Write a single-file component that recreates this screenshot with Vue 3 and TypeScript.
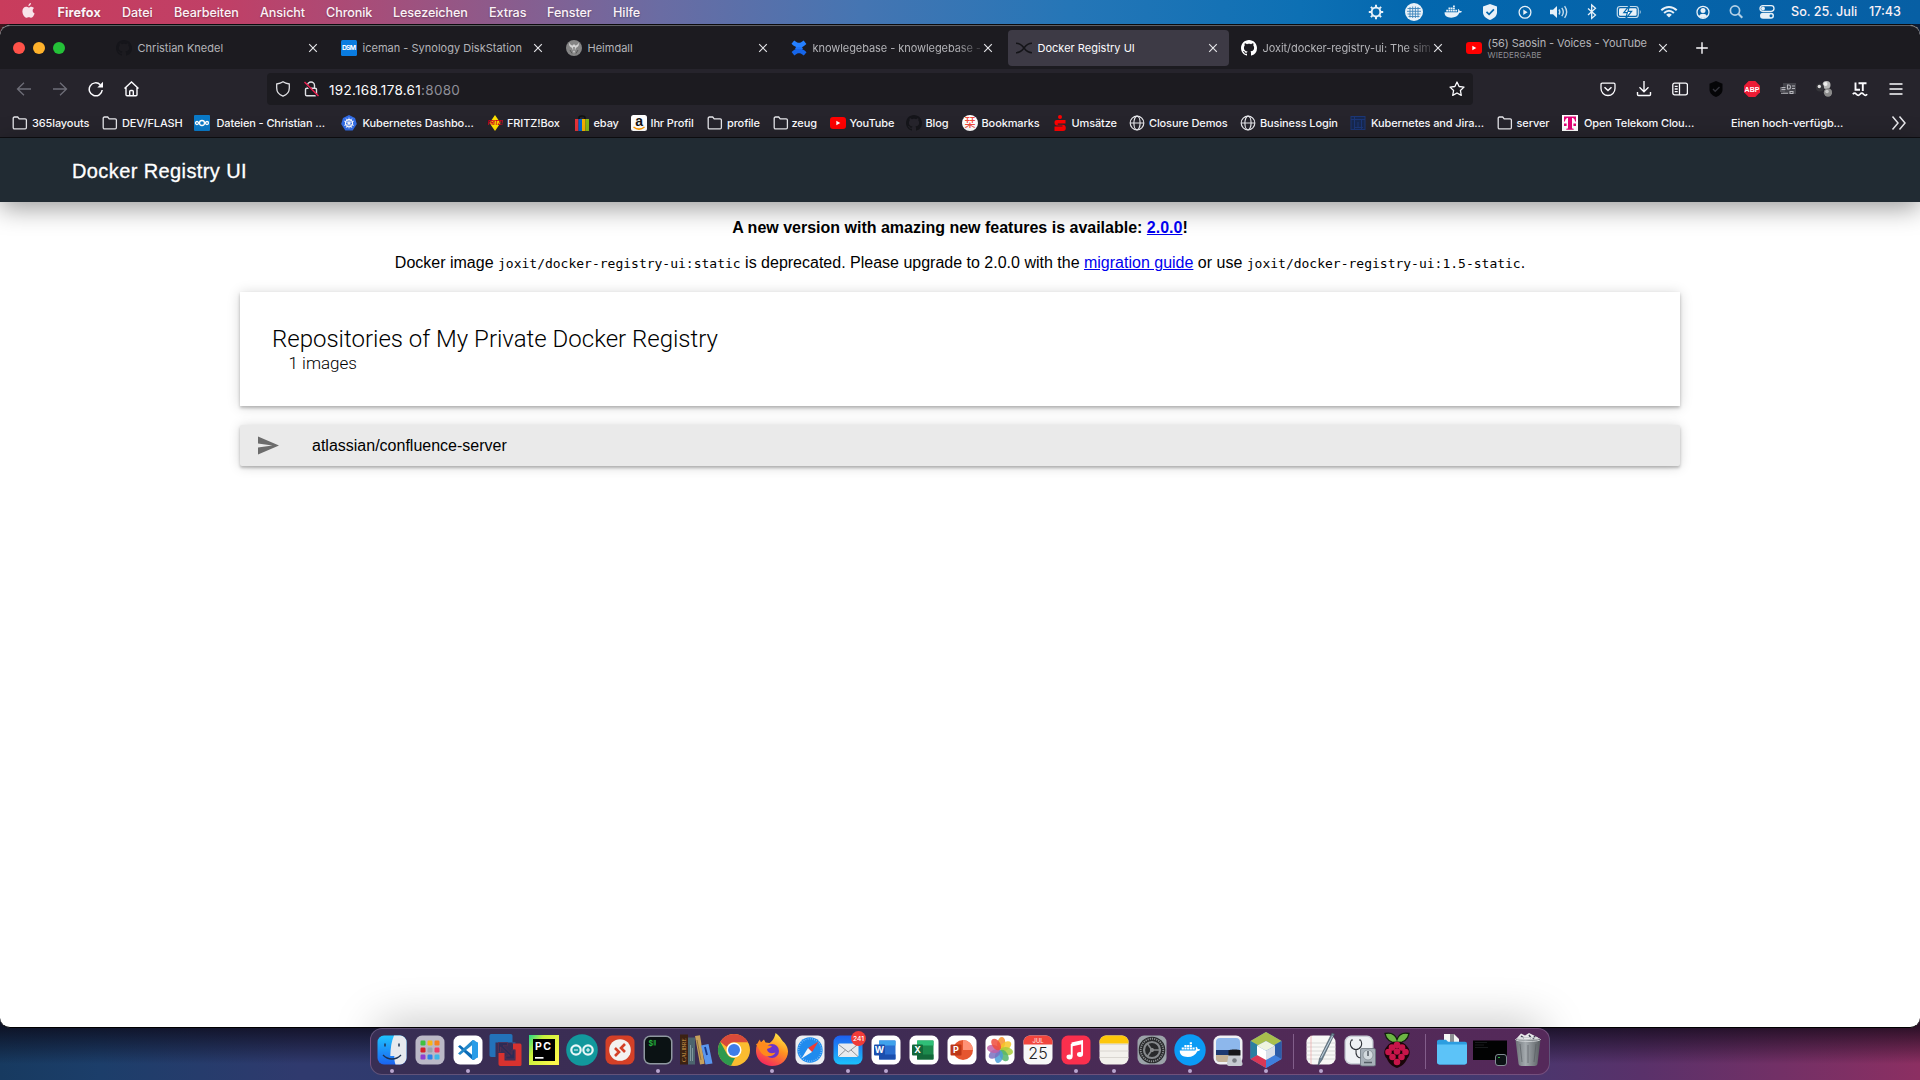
<script setup lang="ts">
interface Entry {
  label: string
  width: number
}
interface Tab {
  icon: string
  title: string
  note?: string
  active?: boolean
  fade?: boolean
}
interface Bookmark {
  icon: string
  label: string
  slot: number
  gap?: number
}
interface DockItem {
  icon: string
  running?: boolean
}

const menu: Entry[] = [
  { label: 'Firefox', width: 64.5 },
  { label: 'Datei', width: 52 },
  { label: 'Bearbeiten', width: 86 },
  { label: 'Ansicht', width: 66 },
  { label: 'Chronik', width: 67 },
  { label: 'Lesezeichen', width: 96 },
  { label: 'Extras', width: 58 },
  { label: 'Fenster', width: 66 },
  { label: 'Hilfe', width: 40 },
]

const status: { icon: string; slot: number }[] = [
  { icon: 'gear', slot: 38 },
  { icon: 'grid', slot: 38.6 },
  { icon: 'whale', slot: 37 },
  { icon: 'check', slot: 35 },
  { icon: 'play', slot: 34.3 },
  { icon: 'sound', slot: 33.6 },
  { icon: 'bluetooth', slot: 37 },
  { icon: 'battery', slot: 39.5 },
  { icon: 'wifi', slot: 33.6 },
  { icon: 'user', slot: 33.2 },
  { icon: 'search', slot: 31 },
  { icon: 'control', slot: 32 },
]

const octocat = (c: string) =>
  `<path fill="${c}" d="M8 0C3.58 0 0 3.58 0 8c0 3.54 2.29 6.53 5.47 7.59.4.07.55-.17.55-.38 0-.19-.01-.82-.01-1.49-2.01.37-2.53-.49-2.69-.94-.09-.23-.48-.94-.82-1.13-.28-.15-.68-.52-.01-.53.63-.01 1.08.58 1.23.82.72 1.21 1.87.87 2.33.66.07-.52.28-.87.51-1.07-1.78-.2-3.64-.89-3.64-3.95 0-.87.31-1.59.82-2.15-.08-.2-.36-1.02.08-2.12 0 0 .67-.21 2.2.82.64-.18 1.32-.27 2-.27s1.36.09 2 .27c1.53-1.04 2.2-.82 2.2-.82.44 1.1.16 1.92.08 2.12.51.56.82 1.27.82 2.15 0 3.07-1.87 3.75-3.65 3.95.29.25.54.73.54 1.48 0 1.07-.01 1.93-.01 2.2 0 .21.15.46.55.38A8.01 8.01 0 0 0 16 8c0-4.42-3.58-8-8-8z"/>`

const whale = (c: string) =>
  `<path fill="${c}" d="M1 8.6h12.2c.5-.8.5-1.7.1-2.5l.6-.5c.7.5 1.1 1.1 1.1 1.8.6-.1 1.6 0 2 .4-.4 1-1.300 1.3-2.300 1.300-1.300 3-3.900 4.500-7.500 4.500C3 13.600.8 11.700 1 8.600z"/><path fill="${c}" d="M2.500 6.200h1.700v1.700H2.500zM4.600 6.200h1.700v1.700H4.600zM6.700 6.200h1.700v1.700H6.700zM8.800 6.200h1.700v1.700H8.800zM4.600 4.200h1.700v1.600H4.600zM6.700 4.200h1.700v1.600H6.700zM8.800 4.200h1.700v1.600H8.800zM8.800 2.200h1.700v1.600H8.800zM10.900 6.200h1.700v1.700h-1.700z"/>`

/* 16px glyphs */
const small: Record<string, string> = {
  none: '',
  githubDark: octocat('#15151a'),
  github: octocat('#ffffff'),
  dsm: '<rect width="16" height="16" rx="1.500" fill="#0a7ce0"/><text x="8" y="10.200" font-size="6.800" font-weight="700" font-family="Inter, sans-serif" text-anchor="middle" fill="#fff" textLength="14">DSM</text>',
  heimdall:
    '<circle cx="8" cy="8" r="8" fill="#858585"/><path d="M3.500 2.500c-1 3 .5 4.500 2.500 5.200L8 13.500l2-5.800c2-.7 3.500-2.200 2.500-5.200-.5 1.800-1.500 3-3.200 3L8 4 6.700 5.500c-1.700 0-2.700-1.200-3.200-3z" fill="#d4d4d4"/><path d="M4 10l2 3.500M12 10l-2 3.500M8 7v4" stroke="#555" stroke-width="1"/>',
  confluence:
    '<path d="M.5 3.800 3.200.4c2.200 1.700 3.300 2.300 4.800 2.300s2.600-.6 4.600-2.300l2.800 3.500C13 6.400 10.800 7.500 8 7.500S3 6.300.5 3.800z" fill="#2580ff"/><path d="M15.500 12.200l-2.700 3.400c-2.200-1.700-3.300-2.300-4.800-2.300s-2.600.6-4.600 2.300L.6 12.100C3 9.600 5.200 8.500 8 8.500s5 1.200 7.500 3.700z" fill="#1666ea"/><path d="M5 7h6l1 2H4z" fill="#1f74f6"/>',
  cross: '<path d="M0 3.300c3.500 0 6 2 8 4.700 2-2.700 4.500-4.700 8-4.700M0 12.700c3.500 0 6-2 8-4.700 2 2.700 4.500 4.700 8 4.700" fill="none" stroke="#141418" stroke-width="1.500"/>',
  youtube: '<rect y="2" width="16" height="12" rx="3" fill="#f00"/><path d="M6.300 5.700v4.600L10.300 8z" fill="#fff"/>',
  folder: '<path d="M1.200 3.200c0-.7.5-1.200 1.200-1.200h3.300l1.500 1.800h6c.7 0 1.200.5 1.200 1.200v7.600c0 .7-.5 1.200-1.200 1.200H2.400c-.7 0-1.200-.5-1.200-1.200z" fill="none" stroke="#e6e6ea" stroke-width="1.300"/>',
  nextcloud:
    '<rect width="16" height="16" rx="1" fill="#0a7ac8"/><g fill="none" stroke="#fff" stroke-width="1.300"><circle cx="8" cy="8" r="2.500"/><circle cx="3" cy="8" r="1.500"/><circle cx="13" cy="8" r="1.500"/></g>',
  kube: '<path d="M8 0l6 2.900L15.800 9l-4.100 6.500H4.300L.2 9 2 2.900z" fill="#326ce5"/><circle cx="8" cy="8.200" r="3.600" fill="none" stroke="#fff" stroke-width="1.100"/><path d="M8 2.500v11M3 6l10 4.500M13 6 3 10.500M5 13l6-9.500M11 13 5 3.500" stroke="#fff" stroke-width=".7"/>',
  fritz: '<path d="M8 0l5.500 8L8 16 2.500 8z" fill="#ffe000"/><text x="8" y="10" font-size="5.500" font-weight="700" font-style="italic" font-family="Inter, sans-serif" text-anchor="middle" fill="#d2001e" textLength="15">FRITZ!</text>',
  ebay: '<path d="M5 5V2.500C5 .5 11 .5 11 2.500V5" fill="none" stroke="#111" stroke-width="1.500"/><path d="M1 4h3.500v12H1z" fill="#e53238"/><path d="M4.500 4H8v12H4.500z" fill="#0064d2"/><path d="M8 4h3.500v12H8z" fill="#f5af02"/><path d="M11.500 4H15v12h-3.500z" fill="#86b817"/>',
  amazon:
    '<rect width="16" height="16" rx="2.500" fill="#fff"/><text x="8" y="11" font-size="14" font-weight="700" font-family="Liberation Sans, sans-serif" text-anchor="middle" fill="#111">a</text><path d="M2.500 12c3.500 2.700 7.500 2.700 11 0" fill="none" stroke="#f90" stroke-width="1.500"/>',
  kanji: '<circle cx="8" cy="8" r="8" fill="#fff"/><text x="8" y="12" font-size="11" font-weight="500" font-family="Noto Sans CJK JP, sans-serif" text-anchor="middle" fill="#f04a3c">栞</text>',
  sparkasse:
    '<circle cx="8" cy="2" r="2" fill="#f00"/><path d="M13.500 5H5C3 5 2.500 6 2.500 7.500S3 10.500 5 10.500h5.500v1H2.500V16H11c2 0 2.800-1 2.800-3s-.8-3.300-2.800-3.300H5.800V8.500h7.700z" fill="#f00"/>',
  globe: '<g fill="none" stroke="#e6e6ea" stroke-width="1.200"><circle cx="8" cy="8" r="6.800"/><ellipse cx="8" cy="8" rx="3.100" ry="6.800"/><path d="M1.200 8h13.600"/></g>',
  jira: '<rect x="1" y="1.500" width="14" height="13" fill="#17284f"/><g fill="none" stroke="#1c3777" stroke-width="1"><rect x="1" y="1.500" width="14" height="13"/><path d="M1 4.500h14M4.500 1.500v13M11.500 4.500v10M8 7v5M5 12.500h8"/></g>',
  telekom:
    '<rect width="16" height="16" fill="#fff"/><path d="M2 1.500h12v5h-1c-.2-2-.9-3.500-3-3.700v9.600c0 1 .5 1.300 1.700 1.300v1H4.300v-1c1.200 0 1.700-.3 1.700-1.300V2.800C3.900 3 3.200 4.500 3 6.500H2zM2 8.500h2.600V11H2zM11.400 8.500H14V11h-2.600z" fill="#e20074"/>',
  back: '<path d="M15 8H1.500M8 1.800 1.500 8 8 14.200" fill="none" stroke="#6e6e78" stroke-width="1.300"/>',
  forward: '<path d="M1 8h13.500M8 1.800 14.500 8 8 14.200" fill="none" stroke="#6e6e78" stroke-width="1.300"/>',
  reload: '<path d="M14.200 9A6.500 6.500 0 1 1 12.300 3.700" fill="none" stroke="#fbfbfe" stroke-width="1.500"/><path d="M15 .8v5.700H9.300z" fill="#fbfbfe"/>',
  home: '<path d="M.5 7.500 7.500 1l7 6.500M2 6.500v7.200c0 .7.400 1.100 1.100 1.100h8.800c.7 0 1.100-.4 1.100-1.100V6.500M5.700 14.500v-4c0-.6.400-1 1-1h1.600c.6 0 1 .4 1 1v4" fill="none" stroke="#fbfbfe" stroke-width="1.400"/>',
  shield: '<path d="M8 .8C6 2.200 4 2.700 1.700 3v4c0 4 2.500 6.800 6.300 8.200 3.800-1.400 6.300-4.200 6.300-8.200V3C12 2.700 10 2.200 8 .8z" fill="none" stroke="#e0e0e4" stroke-width="1.300"/>',
  lock: '<path d="M4.500 7V4.500a3.500 3.500 0 0 1 7 0V7M3.800 7.200h8.400c.8 0 1.300.5 1.300 1.300v5c0 .8-.5 1.300-1.300 1.300H3.800c-.8 0-1.300-.5-1.300-1.300v-5c0-.8.5-1.300 1.300-1.300z" fill="none" stroke="#e0e0e4" stroke-width="1.400"/><path d="M1 1.500 15 15.500" stroke="#1c1b22" stroke-width="2"/><path d="M1.500 1 15.500 15" stroke="#f02050" stroke-width="1.400"/>',
  star: '<path d="M8 1l2.100 4.500 4.900.6-3.600 3.400.9 4.900L8 12l-4.300 2.400.9-4.900L1 6.100l4.900-.6z" fill="none" stroke="#fbfbfe" stroke-width="1.300" stroke-linejoin="round"/>',
  pocket: '<path d="M2.200 2.200h11.600c.7 0 1.200.5 1.200 1.200V7.500a7 7 0 0 1-14 0V3.400c0-.7.500-1.200 1.200-1.200z" fill="none" stroke="#fbfbfe" stroke-width="1.300"/><path d="M4.500 6.200 8 9.500l3.500-3.300" fill="none" stroke="#fbfbfe" stroke-width="1.500"/>',
  download: '<path d="M8 0v10.500M3.500 6.300 8 10.800l4.500-4.500M1.500 11v2.500c0 .6.400 1 1 1h11c.6 0 1-.4 1-1V11" fill="none" stroke="#fbfbfe" stroke-width="1.400"/>',
  sidebar: '<g fill="none" stroke="#fbfbfe" stroke-width="1.300"><rect x=".8" y="2.200" width="14.600" height="11.600" rx="1.800"/><path d="M7.500 2.200v11.600M2.700 5.300h3M2.700 8h3M2.700 10.700h3"/></g>',
  blackShield: '<path d="M8 0l6.500 2.800v6C14.500 12.500 11 15 8 16c-3-1-6.500-3.500-6.500-7.200v-6z" fill="#050507"/><path d="M5 8l2.200 2.200L11.500 6" fill="none" stroke="#34343c" stroke-width="1.400"/>',
  abp: '<path d="M4.700 0h6.600L16 4.700v6.600L11.300 16H4.700L0 11.300V4.700z" fill="#ec1c35"/><text x="8" y="10.500" font-size="7" font-weight="700" font-family="Liberation Sans, sans-serif" text-anchor="middle" fill="#fff">ABP</text>',
  noise: '<path d="M3 2h13v11H3z" fill="#43434a"/><path d="M0 6h5v5H0z" fill="#55555c"/><path d="M1.500 6.500h4M1.500 8.500h4M1 12.300h7" stroke="#b5b5bb" stroke-width="1.100"/><path d="M7.500 4v4h1.500c2 0 2-4 0-4zM12 5h3M12 7.500h3M10 10.500h3v2h-3z" fill="none" stroke="#b5b5bb" stroke-width="1.100"/>',
  balls: '<circle cx="10.500" cy="4" r="4" fill="#b8b8b8"/><circle cx="12" cy="11.500" r="4.200" fill="#8a8a8a"/><circle cx="9.500" cy="3" r="2" fill="#eee"/><circle cx="11" cy="10.500" r="1.800" fill="#c8c8c8"/><circle cx="4" cy="6.500" r="4" fill="#35353a"/><circle cx="3.300" cy="5.500" r="1.700" fill="#ddd"/>',
  lt: '<path d="M3.500 1.500v7.300H8M6.500 2.300h8M10.800 2.300V10" fill="none" stroke="#fbfbfe" stroke-width="1.900"/><path d="M.8 13.200c1.200-1.500 2.400-1.500 3.600 0s2.400 1.500 3.600 0 2.400-1.500 3.600 0 2.400 1.500 3.600 0" fill="none" stroke="#fbfbfe" stroke-width="1.600"/>',
  burger: '<path d="M1.500 3h13M1.500 8h13M1.500 13h13" stroke="#fbfbfe" stroke-width="1.400"/>',
  more: '<path d="M1.500 1.500 7 8l-5.500 6.500M8.500 1.500 14 8l-5.500 6.500" fill="none" stroke="#e6e6ea" stroke-width="1.500"/>',
  close: '<path d="M4.200 4.200l7.600 7.600M11.800 4.200l-7.600 7.600" stroke="#e4e4e8" stroke-width="1.200"/>',
  plus: '<path d="M8 2.200v11.600M2.200 8h11.600" stroke="#fbfbfe" stroke-width="1.400"/>',
  send: '<path d="M0 .5 16 8 0 15.500V9.600L11 8 0 6.400z" fill="#6c6c6c"/>',
}

/* menu bar glyphs on a 26x20 canvas */
const bar: Record<string, string> = {
  gear: '<circle cx="13" cy="10" r="4.400" fill="none" stroke="#e8f1f8" stroke-width="2"/><path d="M13 2.800v2.400M13 14.800v2.400M5.800 10h2.400M17.800 10h2.400M7.900 4.900l1.700 1.700M16.400 13.400l1.700 1.700M18.100 4.900l-1.700 1.700M9.600 13.400l-1.700 1.700" stroke="#e8f1f8" stroke-width="2"/>',
  grid: '<circle cx="13" cy="10" r="9" fill="#e8f1f8"/><path d="M6.500 6.500h13M6 9.300h14M6.500 12h13M7.500 14.500h11M9 5v10.500M11.700 4.500v11.500M14.400 4.500v11.500M17 5v10.500" stroke="#3f86bb" stroke-width=".9"/>',
  whale: `<g transform="translate(3.500 1) scale(1.080)">${whale('#e8f1f8')}</g>`,
  check: '<path d="M13 2l7 2.600v5.600c0 4.300-3.600 6.200-7 7.800-3.400-1.600-7-3.500-7-7.800V4.600z" fill="#e8f1f8"/><path d="M9.500 9.800l2.600 2.600 4.800-5" fill="none" stroke="#0468ad" stroke-width="1.700"/>',
  play: '<circle cx="13" cy="10.300" r="5.900" fill="none" stroke="#e8f1f8" stroke-width="1.300"/><path d="M11.300 7.600v5.400l4.300-2.700z" fill="#e8f1f8"/>',
  sound: '<path d="M4 7.700h3L11 4v12l-4-3.700H4z" fill="#e8f1f8"/><path d="M13 7.500c1 1.500 1 3.500 0 5M15.800 5.800c1.800 2.500 1.800 5.900 0 8.400M18.600 4.200c2.500 3.500 2.500 8.100 0 11.600" fill="none" stroke="#c5dcec" stroke-width="1.400"/>',
  bluetooth: '<path d="M9 6.500l7.500 6.600-3.800 3.300V3l3.800 3.300L9 13" fill="none" stroke="#e8f1f8" stroke-width="1.300"/>',
  battery: '<rect x="1.300" y="4.500" width="21" height="11" rx="2.800" fill="none" stroke="#c5dcec" stroke-width="1.200"/><rect x="3" y="6.200" width="17.600" height="7.600" rx="1.300" fill="#e8f1f8"/><path d="M23.800 8v4c1.200-.6 1.200-3.400 0-4z" fill="#c5dcec"/><path d="M13.500 3.500 7.800 10.600h3.500l-1.500 6 5.800-7.200H12z" fill="#fff" stroke="#0468ad" stroke-width="1.200"/>',
  wifi: '<g fill="none" stroke="#e8f1f8" stroke-width="2"><path d="M5.300 8.200c4.500-4.300 10.900-4.300 15.400 0M8.100 11c3-2.700 6.800-2.700 9.800 0"/></g><path d="M13 15.500l-2.800-2.800c1.700-1.500 3.900-1.500 5.600 0z" fill="#e8f1f8"/>',
  user: '<circle cx="13" cy="10.300" r="6" fill="none" stroke="#e8f1f8" stroke-width="1.300"/><circle cx="13" cy="8.600" r="2.500" fill="#e8f1f8"/><path d="M8.800 14.300c1.500-3.300 6.900-3.300 8.400 0-2.300 2.300-6.100 2.300-8.400 0z" fill="#e8f1f8"/>',
  search: '<circle cx="12" cy="8.500" r="4.600" fill="none" stroke="#b4d0e6" stroke-width="1.700"/><path d="M15.300 11.800l4 4" stroke="#b4d0e6" stroke-width="2"/>',
  control: '<rect x="6" y="3.700" width="14" height="5.600" rx="2.800" fill="none" stroke="#e8f1f8" stroke-width="1.300"/><circle cx="9" cy="6.500" r="1.900" fill="#e8f1f8"/><rect x="6" y="10.700" width="14" height="6" rx="3" fill="#e8f1f8"/><circle cx="17" cy="13.700" r="1.500" fill="#0468ad"/>',
}

const tabs: Tab[] = [
  { icon: 'githubDark', title: 'Christian Knedel' },
  { icon: 'dsm', title: 'iceman - Synology DiskStation' },
  { icon: 'heimdall', title: 'Heimdall' },
  { icon: 'confluence', title: 'knowlegebase - knowlegebase -', fade: true },
  { icon: 'cross', title: 'Docker Registry UI', active: true },
  { icon: 'github', title: 'Joxit/docker-registry-ui: The sim', fade: true },
  { icon: 'youtube', title: '(56) Saosin - Voices - YouTube', note: 'WIEDERGABE' },
]

const bookmarks: Bookmark[] = [
  { icon: 'folder', label: '365layouts', slot: 90 },
  { icon: 'folder', label: 'DEV/FLASH', slot: 91.5 },
  { icon: 'nextcloud', label: 'Dateien - Christian ...', slot: 147, gap: 7 },
  { icon: 'kube', label: 'Kubernetes Dashbo...', slot: 146.5, gap: 6 },
  { icon: 'fritz', label: 'FRITZ!Box', slot: 86.5 },
  { icon: 'ebay', label: 'ebay', slot: 57 },
  { icon: 'amazon', label: 'Ihr Profil', slot: 76.5 },
  { icon: 'folder', label: 'profile', slot: 65.5 },
  { icon: 'folder', label: 'zeug', slot: 57, gap: 3 },
  { icon: 'youtube', label: 'YouTube', slot: 76 },
  { icon: 'githubDark', label: 'Blog', slot: 56 },
  { icon: 'kanji', label: 'Bookmarks', slot: 90 },
  { icon: 'sparkasse', label: 'Umsätze', slot: 77.5 },
  { icon: 'globe', label: 'Closure Demos', slot: 111 },
  { icon: 'globe', label: 'Business Login', slot: 110 },
  { icon: 'jira', label: 'Kubernetes and Jira...', slot: 146.5, gap: 5 },
  { icon: 'folder', label: 'server', slot: 65 },
  { icon: 'telekom', label: 'Open Telekom Clou...', slot: 147.5, gap: 6.5 },
  { icon: 'none', label: 'Einen hoch-verfügb...', slot: 146, gap: 6 },
]

const tools = ['pocket', 'download', 'sidebar', 'blackShield', 'abp', 'noise', 'balls', 'lt', 'burger']

const tile = (fill: string) => `<rect x="4.500" y="4.500" width="29" height="29" rx="6.500" fill="${fill}"/>`

const launchColors = ['#3fc13f', '#f8b518', '#f58220', '#d6232b', '#9aa3ad', '#ef3e6a', '#8f3fd0', '#2d83e8', '#3fb6e8']
const launchDots = launchColors
  .map((c, i) => `<rect x="${9.5 + (i % 3) * 7}" y="${9.5 + Math.floor(i / 3) * 7}" width="5" height="5" rx="1.200" fill="${c}"/>`)
  .join('')
const petals = ['#f8902a', '#f6c628', '#a8cc3a', '#52b46a', '#4a9ed8', '#7a70c0', '#c062a8', '#ee4c3c']
  .map((c, i) => `<ellipse cx="19" cy="12.300" rx="4" ry="6.500" fill="${c}" opacity=".85" transform="rotate(${i * 45 + 10} 19 19)"/>`)
  .join('')
const office = (letter: string, dark: string, mid: string, light: string) =>
  `${tile('#fff')}<rect x="12" y="9.500" width="16.500" height="19" rx="1" fill="${mid}"/><path d="M12 9.500h16.500v5H12z" fill="${light}"/><path d="M12 23.500h16.500v5H12z" fill="${dark}"/><rect x="7" y="13.500" width="11" height="11" rx="1" fill="${dark}"/><text x="12.500" y="22.200" font-size="9" font-weight="700" text-anchor="middle" fill="#fff">${letter}</text>`
const berries = [[19, 14], [14, 16.5], [24, 16.5], [19, 20.5], [10.5, 21], [27.5, 21], [14.5, 26], [23.5, 26], [19, 31]]
  .map(([x, y]) => `<circle cx="${x}" cy="${y}" r="3.300" fill="#c7154a"/>`)
  .join('')

/* dock artwork on a 38x38 canvas */
const apps: Record<string, string> = {
  finder:
    '<defs><linearGradient id="fi" x1="0" y1="0" x2="0" y2="1"><stop stop-color="#1fc3ff"/><stop offset="1" stop-color="#1b63f0"/></linearGradient></defs>' +
    tile('url(#fi)') +
    '<path d="M21 4.500h6a6.500 6.500 0 0 1 6.500 6.500v16a6.500 6.500 0 0 1-6.500 6.500h-4.500c-1-3-1.200-5-1.200-8.500h-4C17.500 17 18.500 10 21 4.500z" fill="#e6e9ee"/><path d="M12 12.500v3M26 12.500v3" stroke="#1c3252" stroke-width="1.500"/><path d="M10 24c5 5.300 13 5.300 18 0" fill="none" stroke="#1c3252" stroke-width="1.300"/>',
  launchpad: tile('#bbb8c6') + launchDots,
  vscode:
    tile('#fff') +
    '<path d="M9 15.500l2-1.500L27 27l-2 2-2.500-1z" fill="#0b6cb8"/><path d="M9 22.500l2 1.500L27 11l-2-2-2.500 1z" fill="#2489ca"/><path d="M23 9l6 2.500v15L23 29z" fill="#2a9de8"/>',
  vmware:
    '<path d="M2.500 5c0-1.500 1-2 2-2h19c1.500 0 2 .8 2 2v7.500h3v-1H8.500v14.500H4.500c-1.500 0-2-.8-2-2z" fill="#2372b9"/><path d="M34.500 14.500v19c0 1-.8 1.500-2 1.500h-19c-1.200 0-2-.8-2-2V22h6v7.500h11v-11H26v-6h6.500c1.200 0 2 .6 2 2z" fill="#d8322f"/><path d="M11.500 11.500h9v3.200H16l9 8.800v-4.500h2.800v9h-9V25h4L13.500 16v5h-2z" fill="#2d2b55" stroke="#5d3052" stroke-width=".7"/>',
  pycharm:
    '<defs><linearGradient id="pc" x1="0" y1="0" x2="1" y2=".7"><stop stop-color="#21d789"/><stop offset=".35" stop-color="#c8f03c"/><stop offset="1" stop-color="#fcf84a"/></linearGradient></defs><path d="M4 4h30v30H4z" fill="url(#pc)"/><path d="M8 8h22v22H8z" fill="#000"/><text x="10" y="18.500" font-size="10.500" font-weight="700" fill="#fff" textLength="16">PC</text><path d="M10 26h8.500v1.700H10z" fill="#fff"/>',
  arduino:
    '<circle cx="19" cy="19" r="15.800" fill="#12989c"/><g fill="none" stroke="#e8f7f7" stroke-width="2.200"><circle cx="13" cy="19" r="4.700"/><circle cx="25" cy="19" r="4.700"/></g><path d="M11 19h4M23 19h4M25 17v4" stroke="#e8f7f7" stroke-width="1.200"/>',
  remote: tile('#d44027') + '<circle cx="19" cy="19" r="10.800" fill="#f3f1f0"/><path d="M14 17l4 4-4 4M24 13l-4 4 4 4" fill="none" stroke="#d44027" stroke-width="2.600"/>',
  terminal:
    '<rect x="4.500" y="4.500" width="29" height="29" rx="6.500" fill="#8f98a0"/><rect x="6" y="6" width="26" height="26" rx="5" fill="#0b1214"/><text x="9.500" y="14.500" font-size="7" font-weight="700" fill="#27b43e">$</text><path d="M14.500 9h2.500v5.500h-2.500z" fill="#177a2c"/>',
  calibre:
    '<path d="M3 3.500h8v30H3z" fill="#3c2213"/><text transform="translate(9.300 31) rotate(-90)" font-size="6" font-family="Liberation Serif, serif" fill="#d9a04a" textLength="24">CALIBRE</text><path d="M11 6.500h7v27h-7z" fill="#4c646e"/><path d="M13.500 14v16M15.500 17v13" stroke="#8ea5ab" stroke-width=".8"/><path d="M18 5l5-.8 4.500 28.500-4.500.8z" fill="#c8a15b"/><path d="M20 9l4 20" stroke="#8f6d35" stroke-width=".9"/><path d="M24 14.500l7.500-1.500 4 19.500-7 1z" fill="#5a96ee"/><path d="M28 16l2 8" stroke="#16378a" stroke-width="1.800"/>',
  chrome:
    '<circle cx="19" cy="19" r="16" fill="#fbbc30"/><path d="M19 3a16 16 0 0 1 14 8.200H19a8 8 0 0 0-7.200 4.800L5.200 10.800A16 16 0 0 1 19 3z" fill="#d84a3a"/><path d="M5.200 10.800 12 23a8 8 0 0 0 8 4l-4 7.800A16 16 0 0 1 5.200 10.800z" fill="#2e9a4e"/><circle cx="19" cy="19" r="7.500" fill="#fff"/><circle cx="19" cy="19" r="6" fill="#3f7de8"/>',
  firefox:
    '<defs><linearGradient id="ff" x1=".8" y1="0" x2=".3" y2="1"><stop stop-color="#fff04a"/><stop offset=".45" stop-color="#ff9320"/><stop offset="1" stop-color="#f5245f"/></linearGradient></defs><path d="M22.500 2c4 2.300 5 5.500 7.500 8.500 2.500 2 5 6 5 10C35 29 28 35 19 35S3 28.500 3 20c0-5 1.500-8.500 4-11.500 0 1 .3 2 1 2.800L11 8.500l1.500 3 4 .5c3-1.500 5.500-6 6-10z" fill="url(#ff)"/><circle cx="19" cy="20" r="7" fill="#6a35c9"/><path d="M3 13l7-1.500 5 3 4 .5c-1 2-3.500 2-5 3 0 3.500 4 5.500 8.500 3.500-2 5-12 5.500-15.500-1.500z" fill="#ff8a1c"/>',
  safari:
    tile('#eceef2') +
    '<circle cx="19" cy="19" r="12.700" fill="#1f8bee"/><circle cx="19" cy="19" r="11.300" fill="none" stroke="#8cc6fb" stroke-width="1.500" stroke-dasharray=".7 1.500"/><path d="M27.500 10.500 21 21l-4-4z" fill="#ee3b35"/><path d="M10.500 27.500 17 17l4 4z" fill="#f2f5f9"/>',
  mail:
    '<defs><linearGradient id="ml" x1="0" y1="0" x2="0" y2="1"><stop stop-color="#1d5ff0"/><stop offset="1" stop-color="#1cc1fb"/></linearGradient></defs>' +
    tile('url(#ml)') +
    '<rect x="9" y="12.500" width="20.500" height="13.500" rx="1.800" fill="#e8eaee"/><path d="M9.500 13.500l9.700 7.500 9.700-7.500M9.500 25.500l7-6.500M29 25.500 22 19" fill="none" stroke="#83888f" stroke-width=".9"/><circle cx="29.500" cy="7.500" r="7.400" fill="#f23b38"/><text x="29.500" y="9.900" font-size="6.700" font-weight="500" text-anchor="middle" fill="#fff">241</text>',
  word: office('W', '#1b4fae', '#2b6fd0', '#3fa2ec'),
  excel: office('X', '#13693a', '#1c8a4c', '#2fbf77'),
  powerpoint:
    tile('#fff') + '<circle cx="20" cy="19" r="10" fill="#e5562f"/><path d="M20 9a10 10 0 0 1 10 10H20z" fill="#ff9276"/><rect x="7.500" y="13.500" width="11" height="11" rx="1" fill="#bd3718"/><text x="13" y="22.200" font-size="9" font-weight="700" text-anchor="middle" fill="#fff">P</text>',
  photos: tile('#fff') + petals,
  calendar:
    tile('#f7f7f7') + '<path d="M4.500 13.500V11A6.500 6.500 0 0 1 11 4.500h16a6.500 6.500 0 0 1 6.500 6.500v2.500z" fill="#f1453d"/><text x="19" y="11.800" font-size="5.800" font-weight="600" text-anchor="middle" fill="#ffd8d5">JUL</text><text x="19" y="28.300" font-size="16" font-weight="300" text-anchor="middle" fill="#222" textLength="19.500">25</text>',
  music:
    tile('#fa2f4d') + '<path d="M14.500 11.500 26 9v4l-11.500 2.500z" fill="#fff"/><path d="M14.700 13v12.500M25.100 10v13" stroke="#fff" stroke-width="1.900"/><ellipse cx="12.500" cy="26" rx="3" ry="2.400" fill="#fff"/><ellipse cx="23" cy="23.500" rx="3" ry="2.400" fill="#fff"/>',
  notes:
    tile('#f3f1ec') + '<path d="M4.500 12.500V11A6.500 6.500 0 0 1 11 4.500h16a6.500 6.500 0 0 1 6.500 6.500v1.500z" fill="#fdc70a"/><path d="M4.500 13.300h29" stroke="#b7b0a0" stroke-width=".8" stroke-dasharray="1 1"/><path d="M4.500 20h29M4.500 26.500h29" stroke="#d3d0ca" stroke-width=".8"/>',
  settings:
    tile('#9ca3a9') + '<circle cx="19" cy="19" r="13.300" fill="#28292b"/><circle cx="19" cy="19" r="11.300" fill="none" stroke="#8b8e91" stroke-width="1.800" stroke-dasharray="1.200 1"/><circle cx="19" cy="19" r="8" fill="none" stroke="#85888b" stroke-width="2.200"/><circle cx="19" cy="19" r="2" fill="#999"/><path d="M19 19 14 12M19 19h8.500M19 19l-5 7" stroke="#85888b" stroke-width="1.600"/>',
  docker: `<circle cx="19" cy="19" r="15.700" fill="#0b9bf5"/><g transform="translate(7.500 8.500) scale(1.280)">${whale('#fff')}</g>`,
  preview:
    '<rect x="4.500" y="4.500" width="29" height="29" rx="6.500" fill="#f0f1f4"/><rect x="7" y="7" width="24" height="24" rx="4" fill="#8db7ec"/><path d="M7 19h24v5H7z" fill="#1d3a72"/><path d="M7 24h24v3a4 4 0 0 1-4 4H11a4 4 0 0 1-4-4z" fill="#c3b195"/><path d="M19.500 24h11.500l2.500 8.500c.3 1.500-.5 2.500-2 2.500H20c-1.500 0-2.200-1-2-2.500z" fill="#c6cbd1"/><path d="M19.500 19.500c0-1.500 12-1.500 12 0v5h-12z" fill="#17181b"/><circle cx="25.500" cy="29.500" r="2.300" fill="#777c82"/>',
  netbeans:
    '<path d="M19 1 34.500 10v18L19 37 3.500 28V10z" fill="#5a8ad8"/><path d="M19 1 34.500 10 27 14.300 19 10l-8 4.300L3.500 10z" fill="#a9bf4d"/><path d="M3.500 10 11 14.300v9.500L3.500 28z" fill="#2c7fa0"/><path d="M3.500 28 11 23.800l8 4.500V37z" fill="#d93855"/><path d="M34.500 28 27 23.800l-8 4.500V37z" fill="#3f7fdc"/><path d="M34.500 10 27 14.300v9.500l7.500 4.200z" fill="#2c5ca8"/><path d="M19 10l9 4.800-9 5-9-5z" fill="#eff4e0"/><path d="M10 14.800l9 5v9.200l-9-5z" fill="#fff"/><path d="M28 14.800l-9 5v9.200l9-5z" fill="#d9dfe8"/>',
  textedit:
    tile('#f8f8f6') + '<path d="M4.500 12h29M4.500 16h29M4.500 20h29M4.500 24h29M4.500 28h29" stroke="#cfd0d2" stroke-width=".8"/><path d="M9 4.500v29" stroke="#eda5a5" stroke-width=".7"/><path d="M30 2 17.500 27.500l-1.500 7 4-5.500L32.500 3z" fill="#6f8596" stroke="#3e4d58" stroke-width=".6"/><path d="M30.500 5 18.800 27" stroke="#c4d3dd" stroke-width="1"/>',
  disk:
    tile('#c9cfd6') + '<rect x="6" y="6" width="26" height="26" rx="5" fill="#eef1f4"/><path d="M13 9h-1.500c-3 5 .5 9.500 4.500 9.500s7.500-4.500 4.500-9.500H19M16 18.500c-.5 6 1.500 9 6 8.500" fill="none" stroke="#30343a" stroke-width="1.100"/><rect x="20.500" y="17.500" width="15" height="17.500" rx="1.500" fill="#a8b1b9" stroke="#68727b" stroke-width=".8"/><circle cx="28" cy="24" r="5" fill="#d3dade" stroke="#7d868d" stroke-width=".7"/><path d="M28 20v5M24 31.500h8" stroke="#555e66" stroke-width="1.500"/>',
  raspberry:
    '<path d="M19 12C12 11.500 8 8 7 2.500c5-1 10 .5 12 6 2-5.500 7-7 12-6C30 8 26 11.500 19 12z" fill="#6cb544" stroke="#11200c" stroke-width="1.300"/><path d="M19 10.500c5 0 8.500 2 10.500 5.500 3 3.500 3 8-.3 11.500C27 33 22.500 36 19 37c-3.500-1-8-4-10.200-9.500C5.500 24 5.500 19.500 8.500 16 10.500 12.500 14 10.500 19 10.500z" fill="#1a0509"/>' +
    berries,
  folder:
    '<path d="M11 3h10l5 5v8H11z" fill="#f4f4f4"/><path d="M17 3h4v9h-4z" fill="#8d8f93"/><path d="M4 10.500C4 9.500 5 8.800 6 8.800h7l2 2h17c1.200 0 2 .8 2 2V31c0 1.500-1 2.500-2.500 2.500h-25C5 33.500 4 32.500 4 31z" fill="#2c9de0"/><path d="M4 13.500h30V31c0 1.500-1 2.500-2.500 2.500h-25C5 33.500 4 32.500 4 31z" fill="#5cc3f8"/>',
  shot:
    '<path d="M2 9.500h34v19.500H2z" fill="#020303"/><path d="M4 11.500h12M4 14h9M4 16.500h13" stroke="#1e2224" stroke-width=".8"/><rect x="24.500" y="23.500" width="11" height="11" rx="2.500" fill="#0b1214" stroke="#8f98a0" stroke-width=".9"/><path d="M27 26.500h2" stroke="#27b43e" stroke-width="1.200"/>',
  trash:
    '<defs><linearGradient id="tr"><stop stop-color="#6d7277"/><stop offset=".4" stop-color="#a4aaae"/><stop offset="1" stop-color="#585d61"/></linearGradient></defs><path d="M8 7l4-4.500 4 2 4-2.500 5 2.500 4 2 1.500 4H7.500z" fill="#e9e9ea"/><path d="M12 5l3 2M20 4l2 3M26 5l-2 3" stroke="#445" stroke-width="1.500"/><path d="M6.500 8.500h25l-3 24c-.3 1.800-1.500 2.500-3 2.500h-13c-1.500 0-2.700-.7-3-2.500z" fill="url(#tr)"/><ellipse cx="19" cy="8.500" rx="12.500" ry="2" fill="none" stroke="#c9cdd0" stroke-width="1"/><path d="M11 13l2 18M27 13l-2 18M19 14v18" stroke="#54595e" stroke-width=".6"/>',
}

const dockMain: DockItem[] = [
  { icon: 'finder', running: true },
  { icon: 'launchpad' },
  { icon: 'vscode', running: true },
  { icon: 'vmware' },
  { icon: 'pycharm' },
  { icon: 'arduino' },
  { icon: 'remote' },
  { icon: 'terminal', running: true },
  { icon: 'calibre' },
  { icon: 'chrome' },
  { icon: 'firefox', running: true },
  { icon: 'safari' },
  { icon: 'mail', running: true },
  { icon: 'word', running: true },
  { icon: 'excel' },
  { icon: 'powerpoint' },
  { icon: 'photos' },
  { icon: 'calendar' },
  { icon: 'music', running: true },
  { icon: 'notes', running: true },
  { icon: 'settings' },
  { icon: 'docker', running: true },
  { icon: 'preview' },
  { icon: 'netbeans', running: true },
]
const dockRecent: DockItem[] = [{ icon: 'textedit', running: true }, { icon: 'disk' }, { icon: 'raspberry' }]
const dockFiles: DockItem[] = [{ icon: 'folder' }, { icon: 'shot' }, { icon: 'trash' }]
const dock = [dockMain, dockRecent, dockFiles]
</script>

<template>
  <div class="desktop">
    <header class="menubar">
      <svg class="apple" viewBox="0 0 14 17"><path fill="#f8e4ea" d="M9.700 0c.1 1.500-1.100 3.200-2.800 3.300C6.700 1.800 8.200.2 9.700 0zM7.100 4.600c.7 0 1.700-.9 3.100-.8 1.100.1 2.200.6 2.900 1.600-2.400 1.500-2 4.800.5 5.800-.6 1.700-2 4.500-3.600 4.500-1 0-1.500-.6-2.700-.6s-1.700.6-2.600.6C2.600 15.800.4 12 .4 8.900c0-3.200 2-5 4-5 1.200 0 2 .7 2.700.7z"/></svg>
      <nav class="menu">
        <span v-for="m in menu" :key="m.label" :style="{ width: m.width + 'px' }">{{ m.label }}</span>
      </nav>
      <div class="status">
        <span v-for="s in status" :key="s.icon" class="stat" :style="{ width: s.slot + 'px' }">
          <svg viewBox="0 0 26 20" v-html="bar[s.icon]"></svg>
        </span>
      </div>
      <div class="clock"><span>So. 25. Juli</span><span>17:43</span></div>
    </header>

    <section class="window">
      <div class="tabstrip">
        <div class="lights"><i class="red"></i><i class="amber"></i><i class="green"></i></div>
        <div v-for="t in tabs" :key="t.title" class="tab" :class="{ active: t.active }">
          <svg class="ico" viewBox="0 0 16 16" v-html="small[t.icon]"></svg>
          <div class="tabtext" :class="{ fade: t.fade, noted: t.note }">
            <span>{{ t.title }}</span>
            <small v-if="t.note">{{ t.note }}</small>
          </div>
          <svg class="ico" viewBox="0 0 16 16" v-html="small.close"></svg>
        </div>
        <svg class="ico plus" viewBox="0 0 16 16" v-html="small.plus"></svg>
      </div>

      <div class="toolbar">
        <div class="navs">
          <svg v-for="n in ['back', 'forward', 'reload', 'home']" :key="n" class="ico" viewBox="0 0 16 16" v-html="small[n]"></svg>
        </div>
        <div class="urlbar">
          <svg class="ico" viewBox="0 0 16 16" v-html="small.shield"></svg>
          <svg class="ico" viewBox="0 0 16 16" v-html="small.lock"></svg>
          <div class="url">192.168.178.61<span>:8080</span></div>
          <svg class="ico" viewBox="0 0 16 16" v-html="small.star"></svg>
        </div>
        <div class="tools">
          <svg v-for="n in tools" :key="n" class="ico" viewBox="0 0 16 16" v-html="small[n]"></svg>
        </div>
      </div>

      <div class="bookmarks">
        <div v-for="b in bookmarks" :key="b.label" class="bookmark" :style="{ width: b.slot + 'px', gap: (b.gap ?? 4) + 'px' }">
          <svg class="ico" viewBox="0 0 16 16" v-html="small[b.icon]"></svg>
          <span>{{ b.label }}</span>
        </div>
        <svg class="ico more" viewBox="0 0 16 16" v-html="small.more"></svg>
      </div>

      <main class="page">
        <div class="appbar">Docker Registry UI</div>
        <p class="notice strong">A new version with amazing new features is available: <a>2.0.0</a>!</p>
        <p class="notice">
          Docker image <code>joxit/docker-registry-ui:static</code> is deprecated. Please upgrade to 2.0.0 with the
          <a>migration guide</a> or use <code>joxit/docker-registry-ui:1.5-static</code>.
        </p>
        <section class="card">
          <h2>Repositories of My Private Docker Registry</h2>
          <div class="count">1 images</div>
        </section>
        <section class="row">
          <svg class="send" viewBox="0 0 16 16" preserveAspectRatio="none" v-html="small.send"></svg>
          <span>atlassian/confluence-server</span>
        </section>
      </main>
    </section>

    <div class="dockshade"></div>
    <footer class="dock">
      <div v-for="(group, i) in dock" :key="i" class="group">
        <div v-for="d in group" :key="d.icon" class="app">
          <svg viewBox="0 0 38 38" v-html="apps[d.icon]"></svg>
          <i v-if="d.running"></i>
        </div>
      </div>
    </footer>
  </div>
</template>

<style>
html,
body {
  margin: 0;
  overflow: hidden;
}
</style>

<style scoped>
.desktop {
  position: relative;
  display: flex;
  flex-direction: column;
  width: 1920px;
  height: 1080px;
  overflow: hidden;
  font-family: Inter, sans-serif;
  background:
    linear-gradient(180deg, rgba(10, 5, 18, 0.75) 1026px, rgba(10, 5, 18, 0) 1064px) 0 0 / 1920px 1080px no-repeat,
    linear-gradient(90deg, #173a60 0, #1c3e6a 100px, #303a6e 300px, #2c3c6e 900px, #403a70 1450px, #59316a 1640px, #8c2f62 1920px) 0 1000px / 1920px 80px no-repeat,
    linear-gradient(90deg, #d8453c 0, #0b5fa3 1920px);
}
.menubar {
  display: flex;
  align-items: center;
  flex: none;
  height: 24px;
  color: #fbf2f6;
  font-size: 13px;
  background: linear-gradient(90deg, #c93c5c 0, #bf4067 230px, #a54e7a 380px, #7f6295 560px, #6a6ca3 660px, #4575b2 860px, #2576b7 1070px, #0d70b4 1300px, #0367ae 1420px, #075fa4 1920px);
}
.apple {
  flex: none;
  width: 13px;
  height: 16px;
  margin: 0 22.5px 2px 22px;
}
.menu {
  display: flex;
  flex: none;
  width: 1308px;
  font-size: 12.6px;
  font-weight: 500;
  letter-spacing: -0.08px;
  white-space: nowrap;
  text-shadow: 0 1px 2px rgba(0, 0, 0, 0.3);
}
.menu span {
  flex: none;
}
.menu span:first-child {
  font-weight: 700;
  letter-spacing: 0.1px;
}
.status {
  display: flex;
  flex: none;
  margin-left: -2.5px;
  width: 428px;
}
.stat {
  flex: none;
}
.stat svg {
  display: block;
  width: 26px;
  height: 20px;
}
.clock {
  display: flex;
  flex: none;
  justify-content: space-between;
  width: 110px;
  margin-bottom: 1px;
  font-size: 12.6px;
  font-weight: 500;
  white-space: nowrap;
}
.window {
  display: flex;
  flex-direction: column;
  flex: none;
  box-sizing: border-box;
  height: 1004px;
  overflow: hidden;
  border-top: 1px solid #0b0b0d;
  border-bottom: 1px solid #000;
  border-radius: 10px;
  background: #fff;
}
.ico {
  flex: none;
  display: block;
  width: 16px;
  height: 16px;
}
.tabstrip {
  display: flex;
  align-items: center;
  flex: none;
  box-sizing: border-box;
  height: 44px;
  border-top: 1px solid #5f5f63;
  border-radius: 10px 10px 0 0;
  background: #1c1b20;
}
.lights {
  display: flex;
  gap: 8px;
  flex: none;
  width: 95px;
  padding-left: 13px;
}
.lights i {
  width: 12px;
  height: 12px;
  border-radius: 50%;
}
.red {
  background: #ff5249;
}
.amber {
  background: #ffb22b;
}
.green {
  background: #24c138;
}
.tab {
  display: flex;
  align-items: center;
  flex: none;
  box-sizing: border-box;
  width: 221px;
  height: 36px;
  margin-right: 4px;
  padding: 0 0 0 8px;
  border-radius: 4px;
  color: #b4b4b8;
  font-size: 11px;
}
.tab.active {
  background: #3d3a45;
  color: #fbfbfe;
}
.tabtext {
  display: flex;
  flex: none;
  flex-direction: column;
  width: 167px;
  margin: 1px 0 0 5.500px;
  white-space: nowrap;
}
.tabtext:not(.noted) {
  letter-spacing: 0.01px;
}
.tabtext.noted {
  margin-top: 0;
  letter-spacing: -0.08px;
}
.tabtext span {
  line-height: 14px;
}
.tabtext small {
  color: #8e8e94;
  font-size: 8.2px;
  line-height: 10px;
  letter-spacing: 0.1px;
}
.fade span {
  letter-spacing: -0.06px;
}
.fade {
  mask-image: linear-gradient(90deg, #000 142px, transparent 174px);
}
.plus {
  margin-left: 10.500px;
}
.toolbar {
  display: flex;
  align-items: center;
  flex: none;
  height: 40px;
  background: #26242c;
}
.navs {
  display: flex;
  gap: 20px;
  width: 251px;
  padding-left: 16px;
}
.urlbar {
  display: flex;
  align-items: center;
  box-sizing: border-box;
  width: 1206px;
  height: 32px;
  padding: 0 8px;
  border-radius: 4px;
  background: #1c1b20;
}
.urlbar .ico:nth-child(2) {
  margin-left: 12px;
}
.url {
  flex: 1;
  margin: 1px 0 0 10px;
  color: #fbfbfe;
  font-size: 13.5px;
  letter-spacing: 0.3px;
}
.url span {
  color: #8f8f98;
}
.tools {
  display: flex;
  gap: 20px;
  margin-left: 127px;
}
.bookmarks {
  display: flex;
  align-items: center;
  flex: none;
  box-sizing: border-box;
  height: 29px;
  padding: 0 0 0 12px;
  border-bottom: 1px solid #0e0e12;
  background: #26242c;
}
.bookmark {
  display: flex;
  align-items: center;
  flex: none;
  color: #fbfbfe;
  font-size: 11px;
  font-weight: 500;
  letter-spacing: -0.12px;
  white-space: nowrap;
}
.more {
  margin-left: 36px;
}
.page {
  display: flex;
  flex-direction: column;
  align-items: center;
  flex: 1;
  color: #000;
  font-family: 'Liberation Sans', Arial, sans-serif;
  font-size: 16px;
}
.appbar {
  box-sizing: border-box;
  align-self: stretch;
  flex: none;
  height: 64px;
  padding-left: 72px;
  background: #212b33;
  box-shadow: 0 6px 26px rgba(0, 0, 0, 0.4);
  color: #fff;
  font-size: 20px;
  line-height: 66px;
  letter-spacing: 0.4px;
  -webkit-text-stroke: 0.3px #fff;
}
.notice {
  margin: 17px 0 0;
  line-height: 18px;
  white-space: nowrap;
}
.notice a {
  color: #0000ee;
  text-decoration: underline;
}
.notice code {
  font-family: 'DejaVu Sans Mono', monospace;
  font-size: 13px;
}
.strong {
  font-weight: 700;
}
.card,
.row {
  box-sizing: border-box;
  width: 1440px;
  box-shadow:
    0 2px 3px rgba(0, 0, 0, 0.24),
    0 1px 12px rgba(0, 0, 0, 0.17);
}
.card {
  height: 114px;
  margin-top: 19px;
  padding: 34px 32px 0;
  font-family: Roboto, sans-serif;
  font-weight: 300;
}
.card h2 {
  margin: 0;
  font-size: 24px;
  font-weight: 300;
  line-height: 26px;
}
.count {
  padding-left: 16.500px;
  line-height: 22px;
  font-size: 17px;
}
.row {
  display: flex;
  align-items: center;
  height: 41px;
  margin-top: 19px;
  border-radius: 2px;
  background: #eaeaea;
}
.row span {
  margin-top: 1px;
}
.send {
  width: 21px;
  height: 19px;
  margin: 0 33px 0 18px;
}
.dockshade {
  position: absolute;
  left: 395px;
  top: 1027px;
  width: 1130px;
  height: 1px;
  box-shadow: 0 14px 46px 16px rgba(0, 0, 0, 0.28);
  clip-path: inset(-60px -90px 1px -90px);
}
.dock {
  position: absolute;
  left: 370px;
  top: 1028px;
  display: flex;
  box-sizing: border-box;
  width: 1180px;
  height: 47px;
  padding-left: 2px;
  border: 1px solid rgba(200, 180, 220, 0.28);
  border-radius: 12px;
  background: linear-gradient(90deg, #382e54 0, #3e2c54 500px, #4f2a56 850px, #55295a 1180px);
}
.group {
  display: flex;
}
.group + .group {
  position: relative;
  margin-left: 8px;
  padding-left: 9px;
}
.group + .group:last-child {
  margin-left: 9px;
  padding-left: 8px;
}
.group + .group::before {
  content: '';
  position: absolute;
  left: 0;
  top: 5px;
  width: 1px;
  height: 35px;
  background: rgba(210, 180, 220, 0.38);
}
.app {
  display: flex;
  flex-direction: column;
  align-items: center;
  width: 38px;
}
.app svg {
  flex: none;
  width: 38px;
  height: 38px;
  margin-top: 2px;
}
.app i {
  width: 4px;
  height: 4px;
  border-radius: 50%;
  background: #b9a6cf;
}
</style>
